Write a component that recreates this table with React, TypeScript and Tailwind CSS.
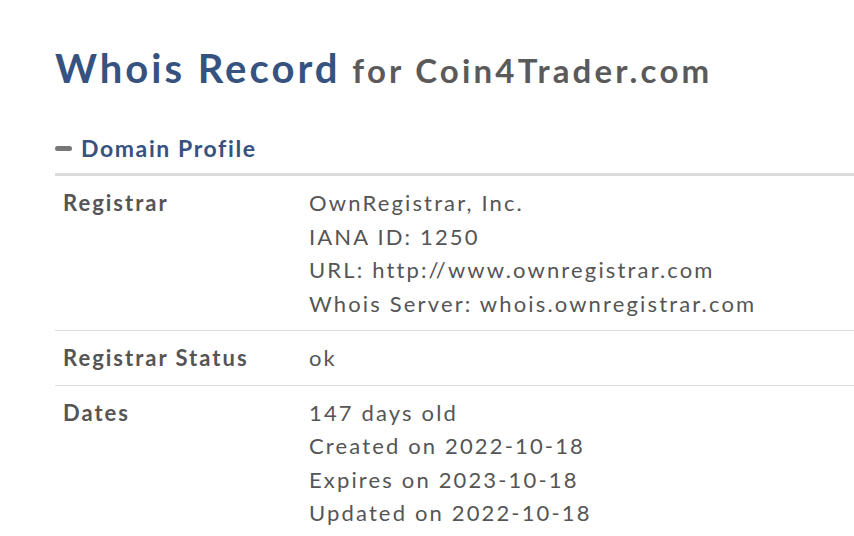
export default function App() {
  const rows: { label: string; values: string[] }[] = [
    {
      label: "Registrar",
      values: [
        "OwnRegistrar, Inc.",
        "IANA ID: 1250",
        "URL: http://www.ownregistrar.com",
        "Whois Server: whois.ownregistrar.com",
      ],
    },
    { label: "Registrar Status", values: ["ok"] },
    {
      label: "Dates",
      values: [
        "147 days old",
        "Created on 2022-10-18",
        "Expires on 2023-10-18",
        "Updated on 2022-10-18",
      ],
    },
  ];

  return (
    <div
      className="min-h-[536px] w-[854px] overflow-hidden bg-white pl-[55px] text-[#555]"
      style={{ fontFamily: "Lato, 'Open Sans', sans-serif" }}
    >
      {/* Title */}
      <h1 className="pt-[40px] leading-[56px] whitespace-nowrap font-bold">
        <span className="text-[40px] tracking-[3px] text-[#36527f]">Whois Record</span>{" "}
        <span className="ml-[8px] text-[33px] tracking-[3.2px] text-[#5a5a5a]">for Coin4Trader.com</span>
      </h1>

      {/* Section header */}
      <div className="mt-[30px] flex items-center gap-[9px] border-b-[3px] border-[#dcdcdc] pb-[12px]">
        <span className="h-[5px] w-[17px] rounded-full bg-[#777]" />
        <span className="text-[23px] font-bold leading-[26px] tracking-[1.6px] text-[#36527f]">
          Domain Profile
        </span>
      </div>

      {/* Rows */}
      <div>
        {rows.map((row) => (
          <div
            key={row.label}
            className="flex border-b border-[#dedede] py-[10px] pl-[8px] text-[22px] leading-[33.5px]"
          >
            <div className="w-[246px] shrink-0 font-bold tracking-[2px] text-[#555]">
              {row.label}
            </div>
            <div className="tracking-[2.15px] text-[#555]">
              {row.values.map((v) => (
                <div key={v} className="whitespace-nowrap">
                  {v}
                </div>
              ))}
            </div>
          </div>
        ))}
      </div>
    </div>
  );
}
